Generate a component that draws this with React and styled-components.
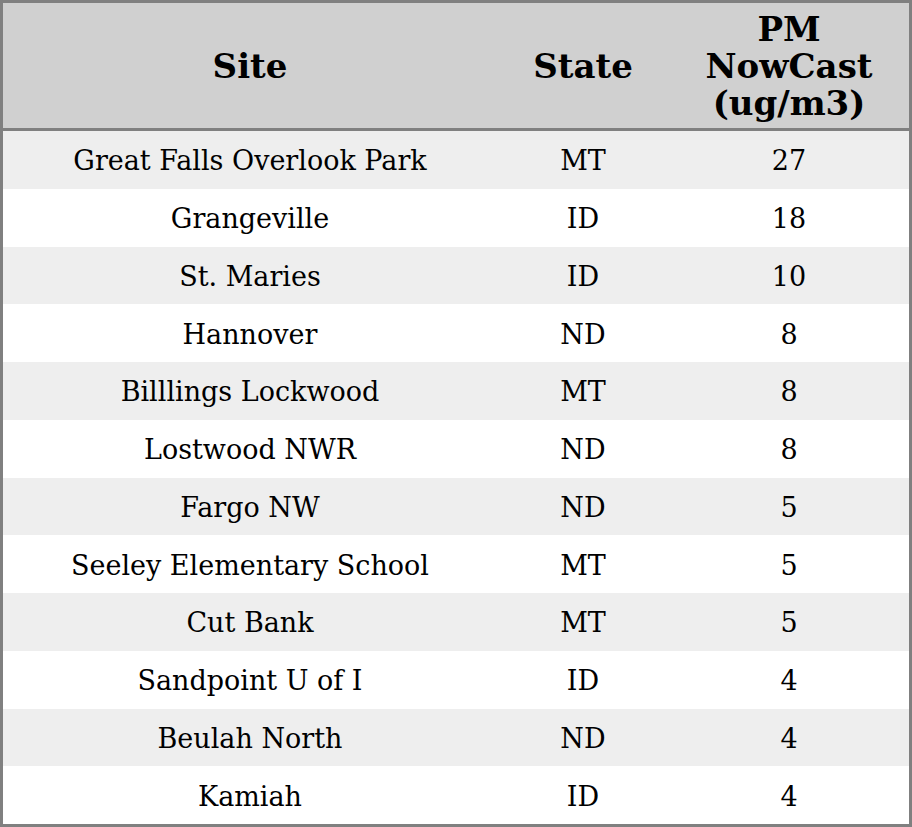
import styled, { createGlobalStyle } from "styled-components";

const rows = [
	["Great Falls Overlook Park", "MT", "27"],
	["Grangeville", "ID", "18"],
	["St. Maries", "ID", "10"],
	["Hannover", "ND", "8"],
	["Billlings Lockwood", "MT", "8"],
	["Lostwood NWR", "ND", "8"],
	["Fargo NW", "ND", "5"],
	["Seeley Elementary School", "MT", "5"],
	["Cut Bank", "MT", "5"],
	["Sandpoint U of I", "ID", "4"],
	["Beulah North", "ND", "4"],
	["Kamiah", "ID", "4"],
];

const App = () => {
	return (
		<>
			<GlobalStyle />
			<Table>
				<HeadRow>
					<HeadCell>Site</HeadCell>
					<HeadCell>State</HeadCell>
					<HeadCell>
						PM
						<br />
						NowCast
						<br />
						(ug/m3)
					</HeadCell>
				</HeadRow>
				{rows.map(([site, state, value], i) => (
					<Row key={site} striped={i % 2 === 0 ? 1 : 0}>
						<Cell>{site}</Cell>
						<Cell>{state}</Cell>
						<Cell>{value}</Cell>
					</Row>
				))}
			</Table>
		</>
	);
};

export default App;

const GlobalStyle = createGlobalStyle`
	html, body {
		margin: 0;
		padding: 0;
		background: #ffffff;
	}
	body {
		font-family: "DejaVu Serif", serif;
		color: #000000;
	}
`;

const Table = styled.div`
	box-sizing: border-box;
	width: 912px;
	height: 827px;
	border: 3px solid #808080;
	display: grid;
	grid-template-rows: 128px repeat(12, 1fr);
`;

const HeadRow = styled.div`
	display: grid;
	grid-template-columns: 494px 172px 1fr;
	background: #d0d0d0;
	border-bottom: 3px solid #808080;
`;

const HeadCell = styled.div`
	display: flex;
	align-items: center;
	justify-content: center;
	text-align: center;
	padding-top: 2px;
	font-size: 34px;
	font-weight: bold;
	line-height: 37px;
`;

const Row = styled.div`
	display: grid;
	grid-template-columns: 494px 172px 1fr;
	background: ${({ striped }) => (striped ? "#eeeeee" : "#ffffff")};
`;

const Cell = styled.div`
	display: flex;
	align-items: center;
	justify-content: center;
	padding-top: 2px;
	font-size: 27px;
`;
